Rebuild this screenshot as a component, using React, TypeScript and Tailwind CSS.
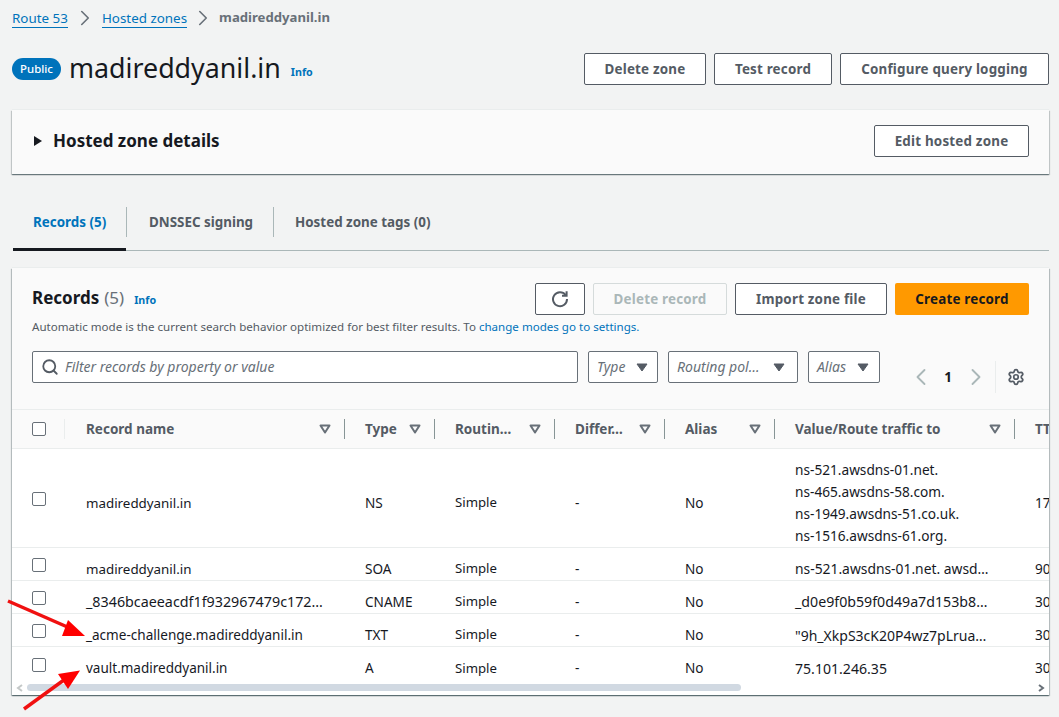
import React from "react";
import { ChevronRight, ChevronLeft, Search, Settings } from "lucide-react";

const grid = "grid grid-cols-[54px_279px_90px_120px_110px_110px_240px_100px] w-[1103px]";

const Btn = ({ children, className = "" }: { children: React.ReactNode; className?: string }) => (
  <button className={`h-8 rounded-[2px] border border-[#545b64] bg-white text-[13.4px] font-bold text-[#545b64] tracking-[0.2px] flex items-center justify-center ${className}`}>
    {children}
  </button>
);

const SortCaret = () => (
  <svg width="12" height="10" viewBox="0 0 12 10" className="shrink-0">
    <path d="M1.5 1.5h9L6 8.5z" fill="none" stroke="#687078" strokeWidth="2" strokeLinejoin="round" />
  </svg>
);

const SolidCaret = () => (
  <svg width="12" height="9" viewBox="0 0 12 9" className="shrink-0">
    <path d="M1 1h10L6 8z" fill="#545b64" stroke="#545b64" strokeWidth="1" strokeLinejoin="round" />
  </svg>
);

const Select = ({ label, className, caretClass }: { label: string; className: string; caretClass: string }) => (
  <div className={`h-8 rounded-[2px] border border-[#687078] bg-white flex items-center pl-[8px] text-[14px] italic text-[#687078] ${className}`}>
    <span className="whitespace-nowrap -mt-[1px]">{label}</span>
    <span className={caretClass}><SolidCaret /></span>
  </div>
);

const Head = ({ label, sep = true }: { label: string; sep?: boolean }) => (
  <div className="relative h-[38px] flex items-center pl-5 pr-[14px]">
    <span className="flex-1 whitespace-nowrap text-[13.5px] font-bold text-[#545b64]">{label}</span>
    <SortCaret />
    {sep && <span className="absolute right-0 top-[9px] h-5 w-px bg-[#879596]" />}
  </div>
);

const Check = ({ className = "" }: { className?: string }) => (
  <span className={`block w-[14px] h-[14px] rounded-[2px] border border-[#687078] bg-white ${className}`} />
);

type Row = { name: string; nameSize: string; type: string; value: React.ReactNode; valueSize: string; ttl: string; h: string };

const rows: Row[] = [
  {
    name: "madireddyanil.in",
    nameSize: "text-[13.35px]",
    type: "NS",
    value: (
      <div className="leading-[22px]">
        <div>ns-521.awsdns-01.net.</div>
        <div>ns-465.awsdns-58.com.</div>
        <div>ns-1949.awsdns-51.co.uk.</div>
        <div>ns-1516.awsdns-61.org.</div>
      </div>
    ),
    valueSize: "text-[13.67px]",
    ttl: "172800",
    h: "h-[99px]",
  },
  { name: "madireddyanil.in", nameSize: "text-[13.35px]", type: "SOA", value: "ns-521.awsdns-01.net. awsd…", valueSize: "text-[13.85px]", ttl: "900", h: "h-[33px]" },
  { name: "_8346bcaeeacdf1f932967479c172…", nameSize: "text-[14.3px]", type: "CNAME", value: "_d0e9f0b59f0d49a7d153b8…", valueSize: "text-[14.2px]", ttl: "300", h: "h-[33px]" },
  { name: "_acme-challenge.madireddyanil.in", nameSize: "text-[13.56px]", type: "TXT", value: "\"9h_XkpS3cK20P4wz7pLrua…", valueSize: "text-[14px]", ttl: "300", h: "h-[33px]" },
  { name: "vault.madireddyanil.in", nameSize: "text-[13.5px]", type: "A", value: "75.101.246.35", valueSize: "text-[14.1px]", ttl: "300", h: "h-[33px]" },
];

const Arrows = () => (
  <svg className="absolute left-0 top-[590px] pointer-events-none" width="100" height="127" viewBox="0 590 100 127">
    <line x1="8" y1="601" x2="72" y2="629" stroke="#f01010" strokeWidth="3.5" />
    <polygon points="68,620 62,636 85,636" fill="#ff0000" />
    <line x1="24" y1="709" x2="68" y2="677" stroke="#f01010" strokeWidth="3.5" />
    <polygon points="58,674 80,670.5 68,689" fill="#ff0000" />
  </svg>
);

export default function App() {
  return (
    <div
      className="relative w-[1059px] h-[717px] overflow-hidden bg-[#f2f3f3] pl-3 pr-[10px] text-[#16191f]"
      style={{ fontFamily: '"Noto Sans", sans-serif' }}
    >
      {/* breadcrumb */}
      <div className="h-[36px] flex items-center text-[13.4px]">
        <span className="text-[#0073bb] border-b border-[#0073bb] leading-[17px] mt-[1px]">Route 53</span>
        <ChevronRight size={26} strokeWidth={1.5} className="text-[#687078] mx-[4px]" />
        <span className="text-[#0073bb] border-b border-[#0073bb] leading-[17px] mt-[1px]">Hosted zones</span>
        <ChevronRight size={26} strokeWidth={1.5} className="text-[#687078] mx-[3px]" />
        <span className="font-bold text-[13.15px] text-[#687078]">madireddyanil.in</span>
      </div>

      {/* title */}
      <div className="mt-[17px] h-8 flex items-center">
        <span className="h-[22px] w-[49px] rounded-full bg-[#0073bb] text-white text-[11.4px] font-medium flex items-center justify-center">Public</span>
        <span className="ml-2 text-[26.8px] leading-8 text-[#16191f] -mt-[3px]">madireddyanil.in</span>
        <span className="ml-[10px] mt-[6px] text-[10.7px] font-bold text-[#0073bb]">Info</span>
        <div className="ml-auto flex gap-2">
          <Btn className="w-[122px]">Delete zone</Btn>
          <Btn className="w-[118px]">Test record</Btn>
          <Btn className="w-[209px]">Configure query logging</Btn>
        </div>
      </div>

      {/* details */}
      <div className="mt-[25px] h-[64px] bg-[#fafafa] flex items-center pb-[2px] pl-[21px] pr-5 shadow-[0_-1px_0_0_#eaeded,0_1px_1px_0_rgba(0,28,36,0.4),1px_1px_1px_0_rgba(0,28,36,0.15),-1px_1px_1px_0_rgba(0,28,36,0.15)]">
        <svg width="10" height="10" viewBox="0 0 10 10"><path d="M1 0l8 5-8 5z" fill="#16191f" /></svg>
        <span className="ml-[10px] text-[17px] font-bold -mt-[1px]">Hosted zone details</span>
        <Btn className="ml-auto w-[155px]">Edit hosted zone</Btn>
      </div>

      {/* tabs */}
      <div className="mt-[33px] h-[44px] ml-[1px] border-b border-[#aab7b8] flex text-[13.4px] font-bold text-[#545b64] relative">
        <div className="relative w-[113px] h-[44px] flex pt-[5px] pl-[20px] text-[#0073bb] border-b-[3px] border-[#16191f]">Records (5)</div>
        <div className="w-px h-[30px] bg-[#aab7b8]" />
        <div className="w-[146px] pt-[5px] pl-[22px]">DNSSEC signing</div>
        <div className="w-px h-[30px] bg-[#aab7b8]" />
        <div className="pt-[5px] pl-[21px]">Hosted zone tags (0)</div>
      </div>

      {/* records */}
      <div className="mt-[17px] h-[427px] bg-[#fafafa] overflow-hidden shadow-[0_-1px_0_0_#eaeded,0_1px_1px_0_rgba(0,28,36,0.4),1px_1px_1px_0_rgba(0,28,36,0.2),-1px_1px_1px_0_rgba(0,28,36,0.2)] flex flex-col">
        <div className="h-[141px] shrink-0 pl-5 pr-5 pt-[15px]">
          <div className="flex items-center h-8">
            <span className="text-[17px] font-bold -mt-[2px]">Records</span>
            <span className="ml-[5px] text-[17px] text-[#687078] -mt-[2px]">(5)</span>
            <span className="ml-[10px] mt-[2px] text-[10.7px] font-bold text-[#0073bb]">Info</span>
            <div className="ml-auto flex gap-2">
              <Btn className="w-[50px]">
                <svg width="18" height="18" viewBox="0 0 18 18" fill="none">
                  <path d="M14.6 5A7 7 0 1 0 16 9" stroke="#545b64" strokeWidth="2" />
                  <path d="M15.6 1.2v4.6H11" stroke="#545b64" strokeWidth="2" />
                </svg>
              </Btn>
              <button className="h-8 w-[134px] rounded-[2px] border border-[#d5dbdb] bg-[#fafafa] text-[13.4px] font-bold text-[#aab7b8] tracking-[0.2px]">Delete record</button>
              <Btn className="w-[152px]">Import zone file</Btn>
              <button className="h-8 w-[134px] rounded-[2px] bg-[#ff9900] text-[13.4px] font-bold text-[#16191f] tracking-[0.2px]">Create record</button>
            </div>
          </div>
          <div className="mt-[4px] text-[11.57px] leading-4 text-[#545b64] whitespace-nowrap">
            Automatic mode is the current search behavior optimized for best filter results. To <span className="text-[#0073bb]">change modes go to settings.</span>
          </div>
          <div className="mt-4 flex items-start">
            <div className="h-8 w-[546px] rounded-[2px] border border-[#687078] bg-white flex items-center pl-[8px] text-[14px] italic text-[#687078]">
              <Search size={18} strokeWidth={2.4} className="text-[#545b64]" />
              <span className="ml-[6px] -mt-[1px]">Filter records by property or value</span>
            </div>
            <Select label="Type" className="ml-[10px] w-[70px]" caretClass="ml-[11px]" />
            <Select label="Routing pol…" className="ml-[10px] w-[130px]" caretClass="ml-[13px]" />
            <Select label="Alias" className="ml-[10px] w-[72px]" caretClass="ml-[11px]" />
            <div className="ml-[27px] mt-[10px] h-8 flex items-center">
              <ChevronLeft size={28} strokeWidth={1.6} className="text-[#aab7b8]" />
              <span className="ml-[8px] w-[10px] text-[13.5px] font-bold text-center">1</span>
              <ChevronRight size={28} strokeWidth={1.6} className="text-[#aab7b8] ml-[9px]" />
              <span className="ml-[5px] w-px h-8 bg-[#eaeded]" />
              <Settings size={18} strokeWidth={2.3} className="ml-[11px] text-[#545b64]" />
            </div>
          </div>
        </div>

        <div className="flex-1 overflow-hidden relative">
          <div className={`${grid} border-t border-b border-[#eaeded] bg-[#fafafa]`}>
            <div className="relative h-[38px] flex items-center pl-5">
              <Check />
              <span className="absolute right-[1px] top-[9px] h-5 w-px bg-[#eaeded]" />
            </div>
            <Head label="Record name" />
            <Head label="Type" />
            <Head label="Routin…" />
            <Head label="Differ…" />
            <Head label="Alias" />
            <Head label="Value/Route traffic to" />
            <Head label="TTL" sep={false} />
          </div>
          <div className="bg-white h-[248px]">
            {rows.map((r, i) => (
              <div key={i} className={`${grid} ${r.h} items-center pt-[10px] text-[13.6px] ${i < rows.length - 1 ? "border-b border-[#eaeded]" : ""}`}>
                <div className="pl-5"><Check className="-mt-[8px]" /></div>
                <div className={`pl-5 whitespace-nowrap ${r.nameSize}`}>{r.name}</div>
                <div className="pl-5">{r.type}</div>
                <div className="pl-5 text-[13.2px]">Simple</div>
                <div className="pl-5">-</div>
                <div className="pl-5">No</div>
                <div className={`pl-5 whitespace-nowrap ${r.valueSize}`}>{r.value}</div>
                <div className="pl-5">{r.ttl}</div>
              </div>
            ))}
            {/* horizontal scrollbar */}
            <div className="absolute left-0 right-0 bottom-0 h-[15px] flex items-center bg-white">
              <svg width="8" height="8" viewBox="0 0 8 8" className="ml-[4px]"><path d="M6 1L2 4l4 3" fill="none" stroke="#c4c8c8" strokeWidth="2" /></svg>
              <div className="ml-[3px] w-[714px] h-[7px] rounded-full bg-[#d1d9e2]" />
              <svg width="8" height="8" viewBox="0 0 8 8" className="ml-auto mr-[4px]"><path d="M2 1l4 3-4 3" fill="none" stroke="#687078" strokeWidth="2" /></svg>
            </div>
          </div>
        </div>
      </div>

      <Arrows />
    </div>
  );
}
